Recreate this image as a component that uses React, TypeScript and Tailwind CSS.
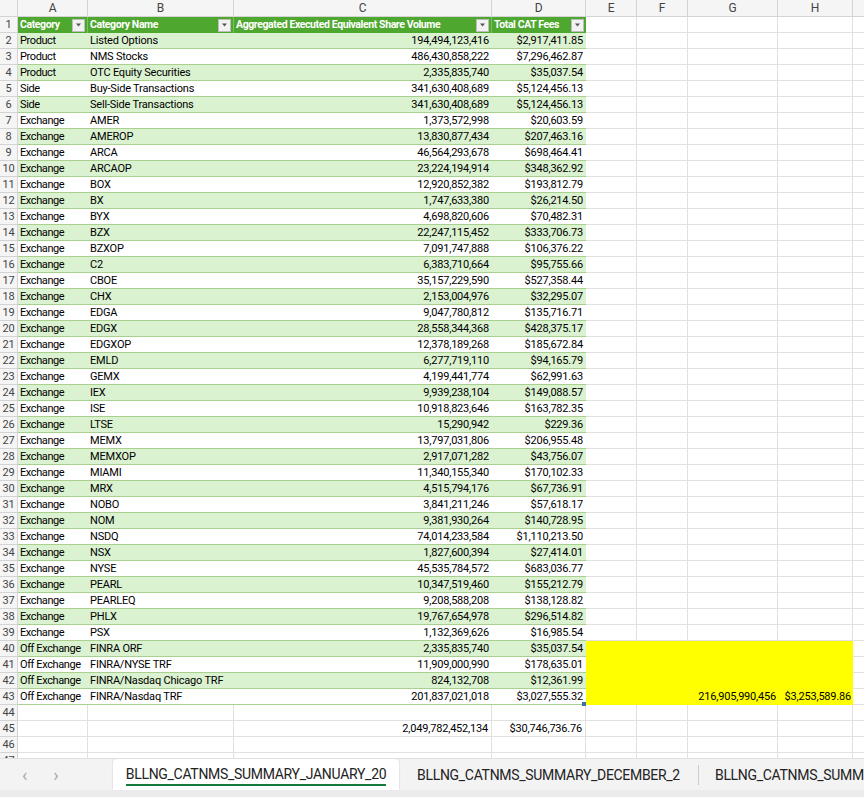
import React from "react";

const data: [string, string, string, string][] = [
["Product","Listed Options","194,494,123,416","$2,917,411.85"],
["Product","NMS Stocks","486,430,858,222","$7,296,462.87"],
["Product","OTC Equity Securities","2,335,835,740","$35,037.54"],
["Side","Buy-Side Transactions","341,630,408,689","$5,124,456.13"],
["Side","Sell-Side Transactions","341,630,408,689","$5,124,456.13"],
["Exchange","AMER","1,373,572,998","$20,603.59"],
["Exchange","AMEROP","13,830,877,434","$207,463.16"],
["Exchange","ARCA","46,564,293,678","$698,464.41"],
["Exchange","ARCAOP","23,224,194,914","$348,362.92"],
["Exchange","BOX","12,920,852,382","$193,812.79"],
["Exchange","BX","1,747,633,380","$26,214.50"],
["Exchange","BYX","4,698,820,606","$70,482.31"],
["Exchange","BZX","22,247,115,452","$333,706.73"],
["Exchange","BZXOP","7,091,747,888","$106,376.22"],
["Exchange","C2","6,383,710,664","$95,755.66"],
["Exchange","CBOE","35,157,229,590","$527,358.44"],
["Exchange","CHX","2,153,004,976","$32,295.07"],
["Exchange","EDGA","9,047,780,812","$135,716.71"],
["Exchange","EDGX","28,558,344,368","$428,375.17"],
["Exchange","EDGXOP","12,378,189,268","$185,672.84"],
["Exchange","EMLD","6,277,719,110","$94,165.79"],
["Exchange","GEMX","4,199,441,774","$62,991.63"],
["Exchange","IEX","9,939,238,104","$149,088.57"],
["Exchange","ISE","10,918,823,646","$163,782.35"],
["Exchange","LTSE","15,290,942","$229.36"],
["Exchange","MEMX","13,797,031,806","$206,955.48"],
["Exchange","MEMXOP","2,917,071,282","$43,756.07"],
["Exchange","MIAMI","11,340,155,340","$170,102.33"],
["Exchange","MRX","4,515,794,176","$67,736.91"],
["Exchange","NOBO","3,841,211,246","$57,618.17"],
["Exchange","NOM","9,381,930,264","$140,728.95"],
["Exchange","NSDQ","74,014,233,584","$1,110,213.50"],
["Exchange","NSX","1,827,600,394","$27,414.01"],
["Exchange","NYSE","45,535,784,572","$683,036.77"],
["Exchange","PEARL","10,347,519,460","$155,212.79"],
["Exchange","PEARLEQ","9,208,588,208","$138,128.82"],
["Exchange","PHLX","19,767,654,978","$296,514.82"],
["Exchange","PSX","1,132,369,626","$16,985.54"],
["Off Exchange","FINRA ORF","2,335,835,740","$35,037.54"],
["Off Exchange","FINRA/NYSE TRF","11,909,000,990","$178,635.01"],
["Off Exchange","FINRA/Nasdaq Chicago TRF","824,132,708","$12,361.99"],
["Off Exchange","FINRA/Nasdaq TRF","201,837,021,018","$3,027,555.32"],
];

const cell = "h-4 border-r border-b border-[#e1e1e1] px-[3px] leading-[15px] whitespace-nowrap overflow-hidden";
const row = "flex w-max [&>*]:shrink-0";
const rh = "w-[18px] h-4 text-center text-[11px] leading-4 bg-[#f5f5f5] text-[#444] border-r border-b border-[#d4d4d4]";

function Drop() {
  return (
    <span className="ml-auto w-[13px] h-[13px] bg-[#f2f2f2] border border-[#bdbdbd] flex items-center justify-center shrink-0">
      <svg width="7" height="4" viewBox="0 0 7 4"><path d="M1 0.5h5L3.5 3.5z" fill="#555" /></svg>
    </span>
  );
}

function Tail() {
  return (
    <>
      <div className={cell + " w-[51px]"} /><div className={cell + " w-[51px]"} /><div className={cell + " w-[90px]"} /><div className={cell + " w-[75px]"} /><div className={cell + " w-[40px]"} />
    </>
  );
}

export default function App() {
  const font = { fontFamily: "Roboto, 'Liberation Sans', sans-serif" };
  const hd = "h-4 bg-[#4ea72e] text-white font-bold flex items-center px-[2px] whitespace-nowrap overflow-hidden tracking-[-0.4px] text-[10.5px]";
  return (
    <div className="w-[864px] h-[797px] overflow-hidden bg-white text-[11px] text-black flex flex-col tracking-[-0.2px]" style={font}>
      <div className="flex-1 overflow-hidden">
        <div className={row + " h-[17px] bg-[#f5f5f5] text-[#444] text-[12px] leading-[16px]"}>
          <div className="w-[18px] border-r border-b border-[#d4d4d4]" />
          {([["A",70],["B",146],["C",258],["D",94],["E",51],["F",51],["G",90],["H",75],["",40]] as [string, number][]).map(([l,w]) => (
            <div key={l} className="border-r border-b border-[#d4d4d4] text-center" style={{ width: w }}>{l}</div>
          ))}
        </div>
        <div className={row}>
          <div className={rh}>1</div>
          <div className={hd + " w-[70px] border-r border-[#7cc25a]"}>Category<Drop /></div>
          <div className={hd + " w-[146px] border-r border-[#7cc25a]"}>Category Name<Drop /></div>
          <div className={hd + " w-[258px] border-r border-[#7cc25a]"}>Aggregated Executed Equivalent Share Volume<Drop /></div>
          <div className={hd + " w-[94px]"}>Total CAT Fees<Drop /></div>
          <Tail />
        </div>
        {data.map((r, i) => {
          const n = i + 2;
          const band = n % 2 === 0 ? "bg-[#daf2d0]" : "bg-white";
          const tb = "border-b border-[#a9d08e]";
          const y = "bg-[#ffff00]";
          return (
            <div key={n} className={row}>
              <div className={rh}>{n}</div>
              <div className={`w-[70px] h-4 px-[2px] leading-[15px] whitespace-nowrap overflow-hidden tracking-[-0.4px] ${band} ${tb}`}>{r[0]}</div>
              <div className={`w-[146px] h-4 px-[2px] leading-[15px] whitespace-nowrap overflow-hidden ${band} ${tb}`}>{r[1]}</div>
              <div className={`w-[258px] h-4 px-[3px] text-right leading-[15px] ${band} ${tb}`}>{r[2]}</div>
              <div className={`w-[94px] h-4 px-[3px] text-right leading-[15px] whitespace-nowrap ${band} ${tb} relative`}>
                {r[3]}
                {n === 43 && <span className="absolute right-0 bottom-[-2px] w-[4px] h-[4px] bg-[#3a6fb0]" />}
              </div>
              {n >= 40 ? (
                <>
                  <div className={`w-[51px] h-4 ${y}`} />
                  <div className={`w-[51px] h-4 ${y}`} />
                  <div className={`w-[90px] h-4 ${y} text-right px-[2px] leading-[15px] whitespace-nowrap`}>{n === 43 ? "216,905,990,456" : ""}</div>
                  <div className={`w-[75px] h-4 ${y} text-right px-[2px] leading-[15px] whitespace-nowrap`}>{n === 43 ? "$3,253,589.86" : ""}</div>
                  <div className={cell + " w-[40px]"} />
                </>
              ) : <Tail />}
            </div>
          );
        })}
        {[44, 45, 46, 47].map((n) => (
          <div key={n} className={row}>
            <div className={rh}>{n}</div>
            <div className={cell + " w-[70px]"} />
            <div className={cell + " w-[146px]"} />
            <div className={cell + " w-[258px] text-right"}>{n === 45 ? "2,049,782,452,134" : ""}</div>
            <div className={cell + " w-[94px] text-right"}>{n === 45 ? "$30,746,736.76" : ""}</div>
            <Tail />
          </div>
        ))}
      </div>
      <div className="h-[32px] shrink-0 bg-[#f3f3f3] flex items-end text-[14px] text-[#222] border-t border-[#e0e0e0] overflow-hidden [&>*]:shrink-0">
        <div className="w-[113px] h-full flex items-center gap-[26px] pl-[22px] text-[#aaa] text-[18px]">
          <span>‹</span><span>›</span>
        </div>
        <div className="w-[286px] h-[31px] bg-white rounded-t-[4px] shadow-[0_0_2px_rgba(0,0,0,0.2)] flex items-center justify-center">
          <span className="leading-5 border-b-[2px] border-[#137a3c] tracking-[-0.3px] whitespace-nowrap">BLLNG_CATNMS_SUMMARY_JANUARY_20</span>
        </div>
        <div className="h-[20px] mb-[5px] flex items-center px-[18px] border-r border-[#ccc] tracking-[-0.3px] whitespace-nowrap">BLLNG_CATNMS_SUMMARY_DECEMBER_2</div>
        <div className="h-[20px] mb-[5px] flex items-center pl-[16px] whitespace-nowrap tracking-[-0.3px]">BLLNG_CATNMS_SUMMARY_NOVEMBER</div>
      </div>
      <div className="h-[7px] shrink-0 bg-[#ebebeb]" />
    </div>
  );
}
